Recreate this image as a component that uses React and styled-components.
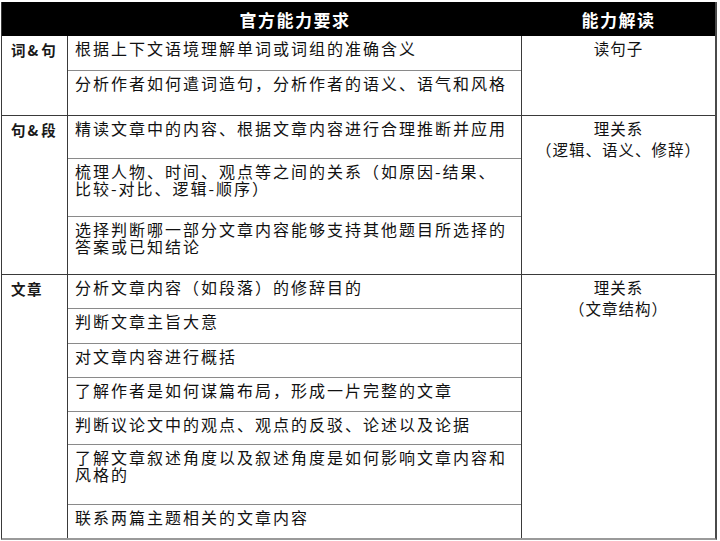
import React from "react";
import styled, { createGlobalStyle } from "styled-components";

const Global = createGlobalStyle`
  html, body { margin: 0; padding: 0; background: #fff; }
  body { font-family: "Noto Sans CJK SC", "Noto Sans", sans-serif; color: #111; }
`;

const Page = styled.div`
  padding: 2px 0 0 1px;
`;

const Table = styled.div`
  width: 716px;
  box-sizing: border-box;
  border-left: 1px solid #3a3a3a;
  border-right: 2px solid #4a4a4a;
  border-bottom: 2px solid #9a9a9a;
  display: flex;
  flex-direction: column;
`;

const cols = "66px 454px 1fr";

const Header = styled.div`
  display: grid;
  grid-template-columns: ${cols};
  height: 34px;
  background: #000;
`;

const HeadCell = styled.div`
  display: flex;
  align-items: center;
  justify-content: center;
  color: #fff;
  font-weight: 700;
  font-size: 17px;
  letter-spacing: 1.5px;
`;

const Group = styled.div`
  display: grid;
  grid-template-columns: ${cols};
  border-top: ${(p) => (p.$first ? "none" : "1px solid #3a3a3a")};
`;

const Label = styled.div`
  box-sizing: border-box;
  border-right: 1px solid #3a3a3a;
  padding: 5px 0 0 9px;
  font-size: 14.5px;
  font-weight: 700;
  line-height: 17px;
  letter-spacing: ${(p) => p.$spacing || "1px"};
  color: #1a1a1a;
`;

const Amp = styled.span`
  margin: 0 2px 0 1px;
`;

const SubList = styled.div`
  display: flex;
  flex-direction: column;
  border-right: 1px solid #3a3a3a;
`;

const SubRow = styled.div`
  box-sizing: border-box;
  height: ${(p) => p.$h}px;
  border-top: ${(p) => (p.$first ? "none" : "1px solid #8a8a8a")};
  padding: 4px 8px 0 7px;
  font-size: 16px;
  line-height: 17px;
  letter-spacing: 2px;
  color: #111;
  white-space: nowrap;
`;

const Interp = styled.div`
  padding-top: 2px;
  text-align: center;
  font-size: 15.5px;
  line-height: 21px;
  letter-spacing: 1px;
  color: #111;
`;

const groups = [
  {
    label: ["词", "句"],
    interp: ["读句子"],
    rows: [
      { h: 34, t: ["根据上下文语境理解单词或词组的准确含义"] },
      { h: 45, t: ["分析作者如何遣词造句，分析作者的语义、语气和风格"] },
    ],
  },
  {
    label: ["句", "段"],
    interp: ["理关系", "（逻辑、语义、修辞）"],
    rows: [
      { h: 42, t: ["精读文章中的内容、根据文章内容进行合理推断并应用"] },
      { h: 58, t: ["梳理人物、时间、观点等之间的关系（如原因-结果、", "比较-对比、逻辑-顺序）"] },
      { h: 58, t: ["选择判断哪一部分文章内容能够支持其他题目所选择的", "答案或已知结论"] },
    ],
  },
  {
    label: ["文章"],
    spacing: "1.5px",
    interp: ["理关系", "（文章结构）"],
    rows: [
      { h: 33, t: ["分析文章内容（如段落）的修辞目的"] },
      { h: 35, t: ["判断文章主旨大意"] },
      { h: 34, t: ["对文章内容进行概括"] },
      { h: 34, t: ["了解作者是如何谋篇布局，形成一片完整的文章"] },
      { h: 33, t: ["判断议论文中的观点、观点的反驳、论述以及论据"] },
      { h: 60, t: ["了解文章叙述角度以及叙述角度是如何影响文章内容和", "风格的"] },
      { h: 34, t: ["联系两篇主题相关的文章内容"] },
    ],
  },
];

const Lines = ({ lines }) =>
  lines.map((l, i) => (
    <React.Fragment key={i}>
      {i > 0 && <br />}
      {l}
    </React.Fragment>
  ));

export default function App() {
  return (
    <>
      <Global />
      <Page>
        <Table>
          <Header>
            <HeadCell />
            <HeadCell>官方能力要求</HeadCell>
            <HeadCell>能力解读</HeadCell>
          </Header>
          {groups.map((g, gi) => (
            <Group key={gi} $first={gi === 0}>
              <Label $spacing={g.spacing}>
                {g.label.length === 2 ? (
                  <>
                    {g.label[0]}
                    <Amp>&amp;</Amp>
                    {g.label[1]}
                  </>
                ) : (
                  g.label[0]
                )}
              </Label>
              <SubList>
                {g.rows.map((r, ri) => (
                  <SubRow key={ri} $h={r.h} $first={ri === 0}>
                    <Lines lines={r.t} />
                  </SubRow>
                ))}
              </SubList>
              <Interp>
                <Lines lines={g.interp} />
              </Interp>
            </Group>
          ))}
        </Table>
      </Page>
    </>
  );
}
